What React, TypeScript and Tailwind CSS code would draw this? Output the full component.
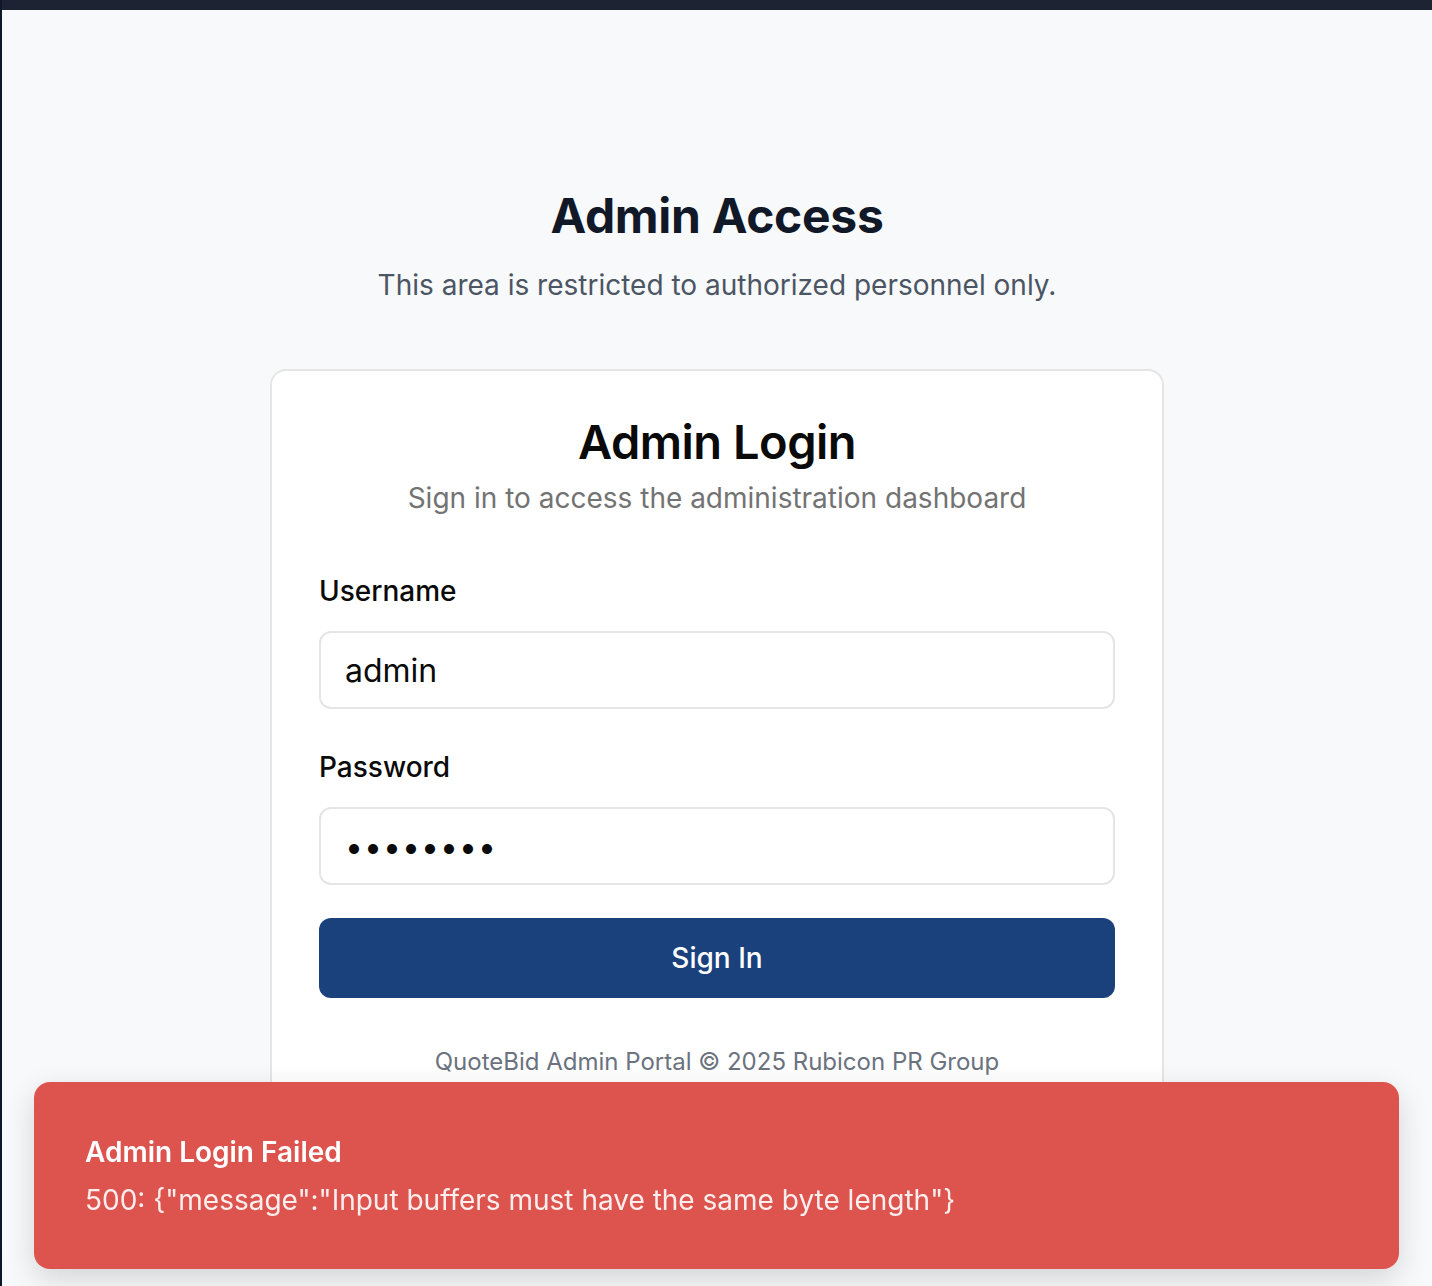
import { useState } from 'react';

const AdminLogin = () => {
  const [username, setUsername] = useState('admin');
  const [password, setPassword] = useState('admin123');

  return (
    <div className="w-[894px] mx-auto mt-[64px] bg-white border-2 border-[#e5e5e5] rounded-[16px] px-[47px] pt-[43px] pb-[48px]">
      <h2 className="text-center text-[47px] leading-[56px] font-semibold tracking-[-0.5px] text-[#0a0a0a]">Admin Login</h2>
      <p className="mt-[8px] text-center text-[28px] leading-[40px] text-[#737373]">
        Sign in to access the administration dashboard
      </p>

      <form className="mt-[53px] flex flex-col" onSubmit={(e) => e.preventDefault()}>
        <label className="text-[28px] leading-[40px] font-medium text-[#0a0a0a]">Username</label>
        <input
          value={username}
          onChange={(e) => setUsername(e.target.value)}
          className="mt-[20px] h-[78px] w-full rounded-[12px] border-2 border-[#e5e5e5] bg-white px-[24px] text-[32px] text-[#0a0a0a] outline-none"
        />

        <label className="mt-[38px] text-[28px] leading-[40px] font-medium text-[#0a0a0a]">Password</label>
        <input
          type="password"
          value={password}
          onChange={(e) => setPassword(e.target.value)}
          className="mt-[20px] h-[78px] w-full rounded-[12px] border-2 border-[#e5e5e5] bg-white px-[24px] text-[32px] tracking-[1px] text-[#0a0a0a] outline-none"
        />

        <button
          type="submit"
          className="mt-[33px] h-[80px] w-full rounded-[12px] bg-[#1b417d] text-[28px] font-medium text-white"
        >
          Sign In
        </button>
      </form>

      <p className="mt-[48px] text-center text-[24px] leading-[32px] text-[#6b7280]">
        QuoteBid Admin Portal © 2025 Rubicon PR Group
      </p>
    </div>
  );
};

const Toast = () => (
  <div className="fixed left-[34px] right-[33px] top-[1082px] h-[187px] rounded-[16px] bg-[#dd534e] px-[51px] flex flex-col justify-center shadow-[0_10px_30px_rgba(0,0,0,0.15)]">
    <div className="text-[28px] leading-[40px] font-semibold text-white">Admin Login Failed</div>
    <div className="mt-[8px] text-[28px] leading-[40px] text-white/90">
      500: {'{"message":"Input buffers must have the same byte length"}'}
    </div>
  </div>
);

export default function App() {
  return (
    <div className="min-h-[1286px] bg-[#f8f9fb] font-['Inter',sans-serif] border-l-2 border-[#0f172a] overflow-hidden">
      <div className="h-[10px] bg-[#1e2334]" />
      <div className="flex flex-col items-center px-4">
        <h1 className="mt-[176px] text-[48px] leading-[60px] font-bold tracking-[-0.3px] text-[#111827]">Admin Access</h1>
        <p className="mt-[19px] text-[28px] leading-[40px] text-[#4b5563]">
          This area is restricted to authorized personnel only.
        </p>
      </div>
      <AdminLogin />
      <Toast />
    </div>
  );
}
